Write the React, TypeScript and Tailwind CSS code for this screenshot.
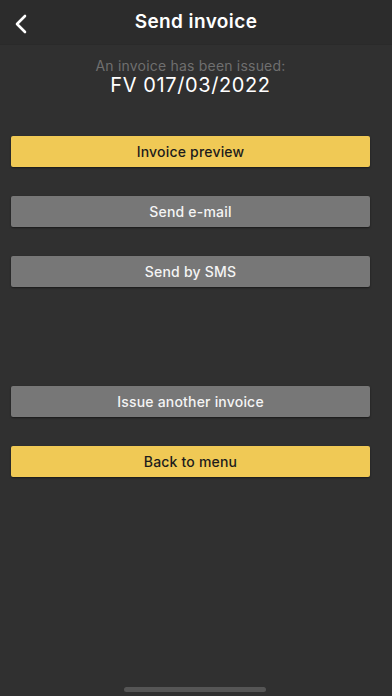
import React from 'react';

type Variant = 'yellow' | 'gray';

const ActionButton: React.FC<{ label: string; variant: Variant; className?: string }> = ({ label, variant, className = '' }) => (
  <button
    className={`w-full h-[31px] rounded-[2px] text-[14px] font-medium tracking-[0.2px] shadow-[0_1px_2px_rgba(0,0,0,0.5)] ${
      variant === 'yellow' ? 'bg-[#f0c955] text-[#1c1c1c]' : 'bg-[#777777] text-[#f4f4f4]'
    } ${className}`}
  >
    {label}
  </button>
);

export default function App() {
  return (
    <div className="relative w-[392px] h-[696px] bg-[#303030] overflow-hidden" style={{ fontFamily: 'Inter, "Noto Sans", sans-serif' }}>
      {/* Header */}
      <div className="relative h-[45px] bg-[#2c2c2c] border-b border-[#2a2a2a] flex items-center justify-center">
        <button className="absolute left-[10px] top-[10px] p-1 text-white">
          <svg width="14" height="20" viewBox="0 0 14 20" fill="none">
            <path d="M11 2 L3 10 L11 18" stroke="white" strokeWidth="2.6" strokeLinecap="round" strokeLinejoin="round" />
          </svg>
        </button>
        <h1 className="text-white text-[19px] font-semibold tracking-[0.4px]">Send invoice</h1>
      </div>

      <div className="px-[11px] w-[381px]">
        {/* Invoice info */}
        <div className="flex flex-col items-center mt-[12px]">
          <p className="text-[#6f6f6f] text-[14px] leading-[17px] tracking-[0.2px]">An invoice has been issued:</p>
          <p className="text-white text-[20px] leading-[22px] tracking-[0.6px]">FV 017/03/2022</p>
        </div>

        {/* Actions */}
        <div className="mt-[40px]">
          <ActionButton label="Invoice preview" variant="yellow" />
          <ActionButton label="Send e-mail" variant="gray" className="mt-[29px]" />
          <ActionButton label="Send by SMS" variant="gray" className="mt-[29px]" />
          <ActionButton label="Issue another invoice" variant="gray" className="mt-[99px]" />
          <ActionButton label="Back to menu" variant="yellow" className="mt-[29px]" />
        </div>
      </div>

      {/* Home indicator */}
      <div className="absolute bottom-[4px] left-[124px] w-[142px] h-[5px] rounded-full bg-[#555555]" />
    </div>
  );
}
